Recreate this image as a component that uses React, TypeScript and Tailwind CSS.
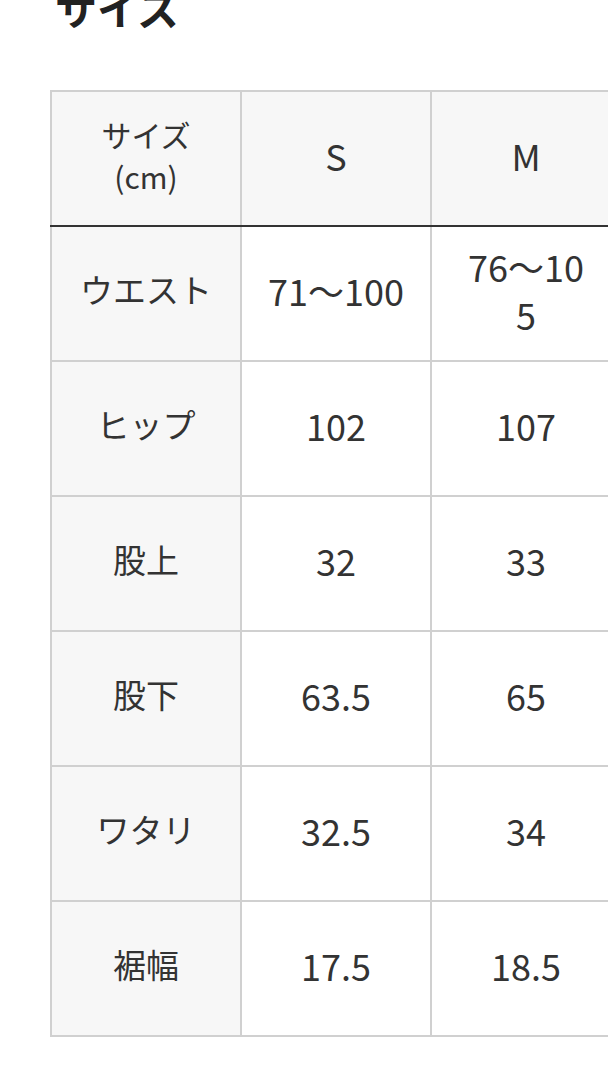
import React from 'react';

const FONT = '"Noto Sans CJK JP", "Noto Sans", sans-serif';

const ROWS: { label: string; s: React.ReactNode; m: React.ReactNode }[] = [
  { label: 'ウエスト', s: '71〜100', m: <>76〜10<br />5</> },
  { label: 'ヒップ', s: '102', m: '107' },
  { label: '股上', s: '32', m: '33' },
  { label: '股下', s: '63.5', m: '65' },
  { label: 'ワタリ', s: '32.5', m: '34' },
  { label: '裾幅', s: '17.5', m: '18.5' },
];

export default function App() {
  return (
    <div className="w-[608px] h-[1080px] overflow-hidden bg-white text-[#333]" style={{ fontFamily: FONT }}>
      <h2 className="mt-[-14px] ml-[55px] text-[42px] leading-none font-bold text-[#222]">サイズ</h2>

      <div className="mt-[62px] ml-[50px] w-[558px] overflow-hidden">
        <table className="w-[571px] table-fixed border-collapse border-2 border-[#d0d0d0] text-center">
          <colgroup>
            <col className="w-[190px]" />
            <col className="w-[190px]" />
            <col className="w-[190px]" />
          </colgroup>
          <thead>
            <tr className="h-[135px] bg-[#f7f7f7] border-b-2 border-b-[#333]">
              <th className="border-2 border-[#d0d0d0] border-b-[#333] font-normal text-[30px] leading-[42px] pb-2">
                サイズ<br />(cm)
              </th>
              <th className="border-2 border-[#d0d0d0] border-b-[#333] font-normal text-[36px] pb-2">S</th>
              <th className="border-2 border-[#d0d0d0] border-b-[#333] font-normal text-[36px] pb-2">M</th>
            </tr>
          </thead>
          <tbody>
            {ROWS.map((r) => (
              <tr key={r.label} className="h-[135px]">
                <td className="border-2 border-[#d0d0d0] bg-[#f7f7f7] text-[33px] pb-2">{r.label}</td>
                <td className="border-2 border-[#d0d0d0] text-[36px] px-2 pb-2">{r.s}</td>
                <td className="border-2 border-[#d0d0d0] text-[36px] leading-[48px] px-2 pb-2">{r.m}</td>
              </tr>
            ))}
          </tbody>
        </table>
      </div>
    </div>
  );
}
